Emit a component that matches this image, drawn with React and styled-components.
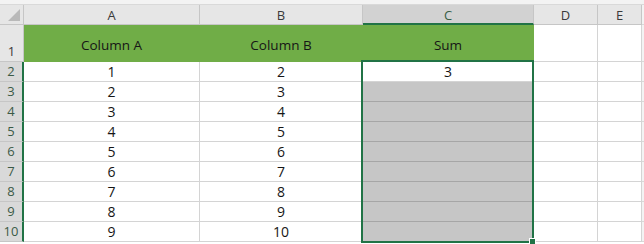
import React from 'react'
import styled, { createGlobalStyle } from 'styled-components'

const GlobalStyle = createGlobalStyle`
  html, body {
    margin: 0;
    padding: 0;
    background: #ffffff;
  }
  body {
    font-family: "Open Sans", "Liberation Sans", sans-serif;
    overflow: hidden;
  }
`;

const green = '#217346';

const columns = ['A', 'B', 'C', 'D', 'E'];
const header = ['Column A', 'Column B', 'Sum'];
const rows = [
  [1, 2, 3],
  [2, 3, ''],
  [3, 4, ''],
  [4, 5, ''],
  [5, 6, ''],
  [6, 7, ''],
  [7, 8, ''],
  [8, 9, ''],
  [9, 10, ''],
];

const Sheet = styled.div`
  position: relative;
  width: 644px;
  height: 244px;
  overflow: hidden;
  background: #ffffff;
`;

const TopStrip = styled.div`
  height: 4px;
  background: #f3f3f3;
  border-bottom: 1px solid #d9d9d9;
`;

const Grid = styled.div`
  display: grid;
  grid-template-columns: 24px 176px 163px 171px 64px 44px 2px;
  grid-template-rows: 20px 37px repeat(9, 20px);
`;

const Corner = styled.div`
  position: relative;
  box-sizing: border-box;
  background: #e6e6e6;
  border-right: 1px solid #c6c6c6;
  border-bottom: 1px solid #c6c6c6;
  &::after {
    content: '';
    position: absolute;
    right: 3px;
    bottom: 3px;
    width: 0;
    height: 0;
    border-left: 12px solid transparent;
    border-bottom: 12px solid #b9b9b9;
  }
`;

const ColHead = styled.div`
  box-sizing: border-box;
  display: flex;
  align-items: center;
  justify-content: center;
  font-size: 13px;
  color: ${p => (p.$active ? '#385e46' : '#3a3a3a')};
  background: ${p => (p.$active ? '#d2d2d2' : '#e6e6e6')};
  border-right: 1px solid #c6c6c6;
  border-bottom: ${p => (p.$active ? `2px solid ${green}` : '1px solid #c6c6c6')};
  padding-top: ${p => (p.$active ? '1px' : '0')};
`;

const RowHead = styled.div`
  box-sizing: border-box;
  display: flex;
  align-items: flex-end;
  justify-content: center;
  padding-bottom: 1px;
  font-size: 13px;
  line-height: 18px;
  color: ${p => (p.$active ? '#3b5a46' : '#3a3a3a')};
  background: ${p => (p.$active ? '#d9d9d9' : '#e6e6e6')};
  border-bottom: 1px solid #c6c6c6;
  border-right: ${p => (p.$active ? `2px solid ${green}` : '1px solid #c6c6c6')};
`;

const Cell = styled.div`
  box-sizing: border-box;
  display: flex;
  align-items: center;
  justify-content: center;
  font-size: ${p => (p.$title ? '13.5px' : '14px')};
  color: #161616;
  background: ${p => p.$fill || '#ffffff'};
  border-right: 1px solid ${p => (p.$fill ? p.$fill : '#d4d4d4')};
  border-bottom: 1px solid ${p => p.$line || '#d4d4d4'};
  padding-top: ${p => (p.$title ? '3px' : '0')};
`;

const Filler = styled.div`
  background: #f3f3f3;
  border-bottom: 1px solid #d9d9d9;
`;

const Selection = styled.div`
  position: absolute;
  left: 361px;
  top: 60px;
  width: 173px;
  height: 183px;
  box-sizing: border-box;
  border: 2px solid ${green};
  pointer-events: none;
`;

const FillHandle = styled.div`
  position: absolute;
  left: 529px;
  top: 238px;
  width: 5px;
  height: 5px;
  background: ${green};
  border: 1px solid #ffffff;
`;

function App() {
  return (
    <Sheet>
      <GlobalStyle />
      <TopStrip />
      <Grid>
        <Corner />
        {columns.map(c => (
          <ColHead key={c} $active={c === 'C'}>{c}</ColHead>
        ))}
        <Filler />

        <RowHead>1</RowHead>
        {header.map(h => (
          <Cell key={h} $fill="#70ad47" $line="#70ad47" $title>{h}</Cell>
        ))}
        <Cell />
        <Cell />
        <Filler />

        {rows.map((r, i) => (
          <React.Fragment key={i}>
            <RowHead $active>{i + 2}</RowHead>
            <Cell>{r[0]}</Cell>
            <Cell>{r[1]}</Cell>
            {i === 0 ? (
              <Cell>{r[2]}</Cell>
            ) : (
              <Cell $fill="#c6c6c6" $line="#a6a6a6" />
            )}
            <Cell />
            <Cell />
            <Filler />
          </React.Fragment>
        ))}
      </Grid>
      <Selection />
      <FillHandle />
    </Sheet>
  )
}

export default App
